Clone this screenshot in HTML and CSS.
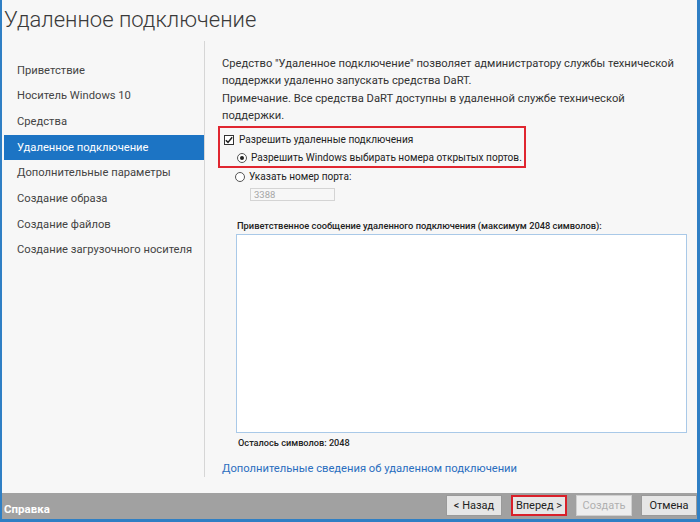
FILE: index.html
```html
<!DOCTYPE html>
<html lang="ru">
<head>
<meta charset="utf-8">
<link rel="stylesheet" href="styles.css">
</head>
<body>
<div class="window">
  <header class="title">Удаленное подключение</header>
  <div class="main">
    <nav class="sidebar">
      <div class="nav-item">Приветствие</div>
      <div class="nav-item">Носитель Windows 10</div>
      <div class="nav-item">Средства</div>
      <div class="nav-item active">Удаленное подключение</div>
      <div class="nav-item">Дополнительные параметры</div>
      <div class="nav-item">Создание образа</div>
      <div class="nav-item">Создание файлов</div>
      <div class="nav-item">Создание загрузочного носителя</div>
    </nav>
    <section class="content">
      <p class="para">Средство "Удаленное подключение" позволяет администратору службы технической поддержки удаленно запускать средства DaRT.</p>
      <p class="para p2">Примечание. Все средства DaRT доступны в удаленной службе технической поддержки.</p>
      <div class="highlight">
        <div class="row check-row">
          <span class="checkbox"><svg width="8" height="8" viewBox="0 0 8 8"><path d="M0.8 4.2 L3 6.4 L7.2 1.2" fill="none" stroke="#222" stroke-width="1.5"/></svg></span>
          <span>Разрешить удаленные подключения</span>
        </div>
        <div class="row radio-row">
          <span class="radio checked"></span>
          <span>Разрешить Windows выбирать номера открытых портов.</span>
        </div>
      </div>
      <div class="row radio-row second">
        <span class="radio"></span>
        <span>Указать номер порта:</span>
      </div>
      <div class="port">3388</div>
      <div class="msg-label">Приветственное сообщение удаленного подключения (максимум 2048 символов):</div>
      <div class="textarea"></div>
      <div class="remaining">Осталось символов: 2048</div>
      <div class="link">Дополнительные сведения об удаленном подключении</div>
    </section>
  </div>
  <footer class="footer">
    <span class="help">Справка</span>
    <div class="buttons">
      <span class="btn">&lt; Назад</span>
      <span class="btn next">Вперед &gt;</span>
      <span class="btn disabled">Создать</span>
      <span class="btn">Отмена</span>
    </div>
  </footer>
</div>
</body>
</html>
```

FILE: styles.css
```css
* { box-sizing: border-box; }
html, body { margin: 0; padding: 0; }
body {
  width: 700px;
  height: 522px;
  overflow: hidden;
  font-family: Roboto, "Open Sans", sans-serif;
  font-size: 11.2px;
  color: #333;
  background: #f7f7f7;
}
.window {
  width: 700px;
  height: 522px;
  display: flex;
  flex-direction: column;
  border-left: 2px solid #2f7fc4;
  border-right: 3px solid #2f7fc4;
  border-bottom: 3px solid #2f7fc4;
  background: #f7f7f7;
}
.title {
  height: 43px;
  padding: 4px 0 0 2px;
  font-size: 22px;
  font-weight: 300;
  color: #3a3a3a;
  line-height: 32px;
}
.main {
  flex: 1;
  display: flex;
  padding-bottom: 16px;
}
.sidebar {
  width: 203px;
  padding: 17px 0 0 2px;
  border-right: 1px solid #d6d6d6;
}
.nav-item {
  height: 25.7px;
  line-height: 25.7px;
  padding-left: 13px;
  color: #444;
  white-space: nowrap;
}
.nav-item.active {
  background: #1c74c4;
  color: #fff;
}
.content {
  flex: 1;
  padding: 14px 10px 0 17px;
}
.para {
  margin: 0;
  line-height: 17px;
}
.p2 { margin-top: 1px; }
.highlight {
  margin: 2px 0 0 -4px;
  width: 308px;
  height: 42px;
  border: 2px solid #e02630;
  padding: 3px 0 0 4px;
}
.row {
  display: flex;
  align-items: center;
  height: 18px;
  white-space: nowrap;
  font-size: 10.1px;
  color: #222;
}
.checkbox {
  width: 10px;
  height: 10px;
  border: 1px solid #333;
  background: #fff;
  display: flex;
  align-items: center;
  justify-content: center;
  margin-right: 5px;
}
.radio-row { padding-left: 13px; }
.radio {
  width: 10px;
  height: 10px;
  border-radius: 50%;
  border: 1px solid #555;
  background: #fff;
  margin-right: 4px;
  display: flex;
  align-items: center;
  justify-content: center;
}
.radio.checked::after {
  content: "";
  width: 4px;
  height: 4px;
  border-radius: 50%;
  background: #222;
}
.port {
  margin: 2px 0 0 28px;
  width: 85px;
  height: 13px;
  border: 1px solid #d4d4d4;
  background: #f7f7f7;
  color: #a6a6a6;
  font-size: 9.5px;
  line-height: 11px;
  padding-left: 3px;
}
.msg-label {
  margin: 18px 0 0 15px;
  font-size: 9.3px;
  font-weight: 500;
  color: #222;
  line-height: 14px;
}
.textarea {
  margin: 1px 0 0 14px;
  height: 199px;
  background: #fff;
  border: 1px solid #a9c9e8;
}
.remaining {
  margin: 3px 0 0 16px;
  font-size: 9.2px;
  font-weight: 500;
  color: #222;
  line-height: 14px;
}
.link {
  margin-top: 10px;
  color: #2a6ebf;
  font-size: 11.2px;
  line-height: 17px;
}
.footer {
  height: 28px;
  background: #a1a1a1;
  display: flex;
  align-items: center;
  justify-content: space-between;
  padding: 0 0 0 2px;
}
.help {
  color: #fff;
  font-weight: 700;
  font-size: 11.5px;
  padding-top: 6px;
}
.buttons {
  display: flex;
  gap: 9px;
}
.btn {
  width: 56px;
  height: 21px;
  border: 1px solid #9a9a9a;
  background: #e6e6e6;
  color: #222;
  font-size: 11px;
  line-height: 19px;
  text-align: center;
  white-space: nowrap;
}
.btn.next {
  border: 2px solid #d9202a;
  line-height: 17px;
}
.btn.disabled {
  color: #b0b0b0;
  background: #eeeeee;
  border-color: #d0d0d0;
}
```
